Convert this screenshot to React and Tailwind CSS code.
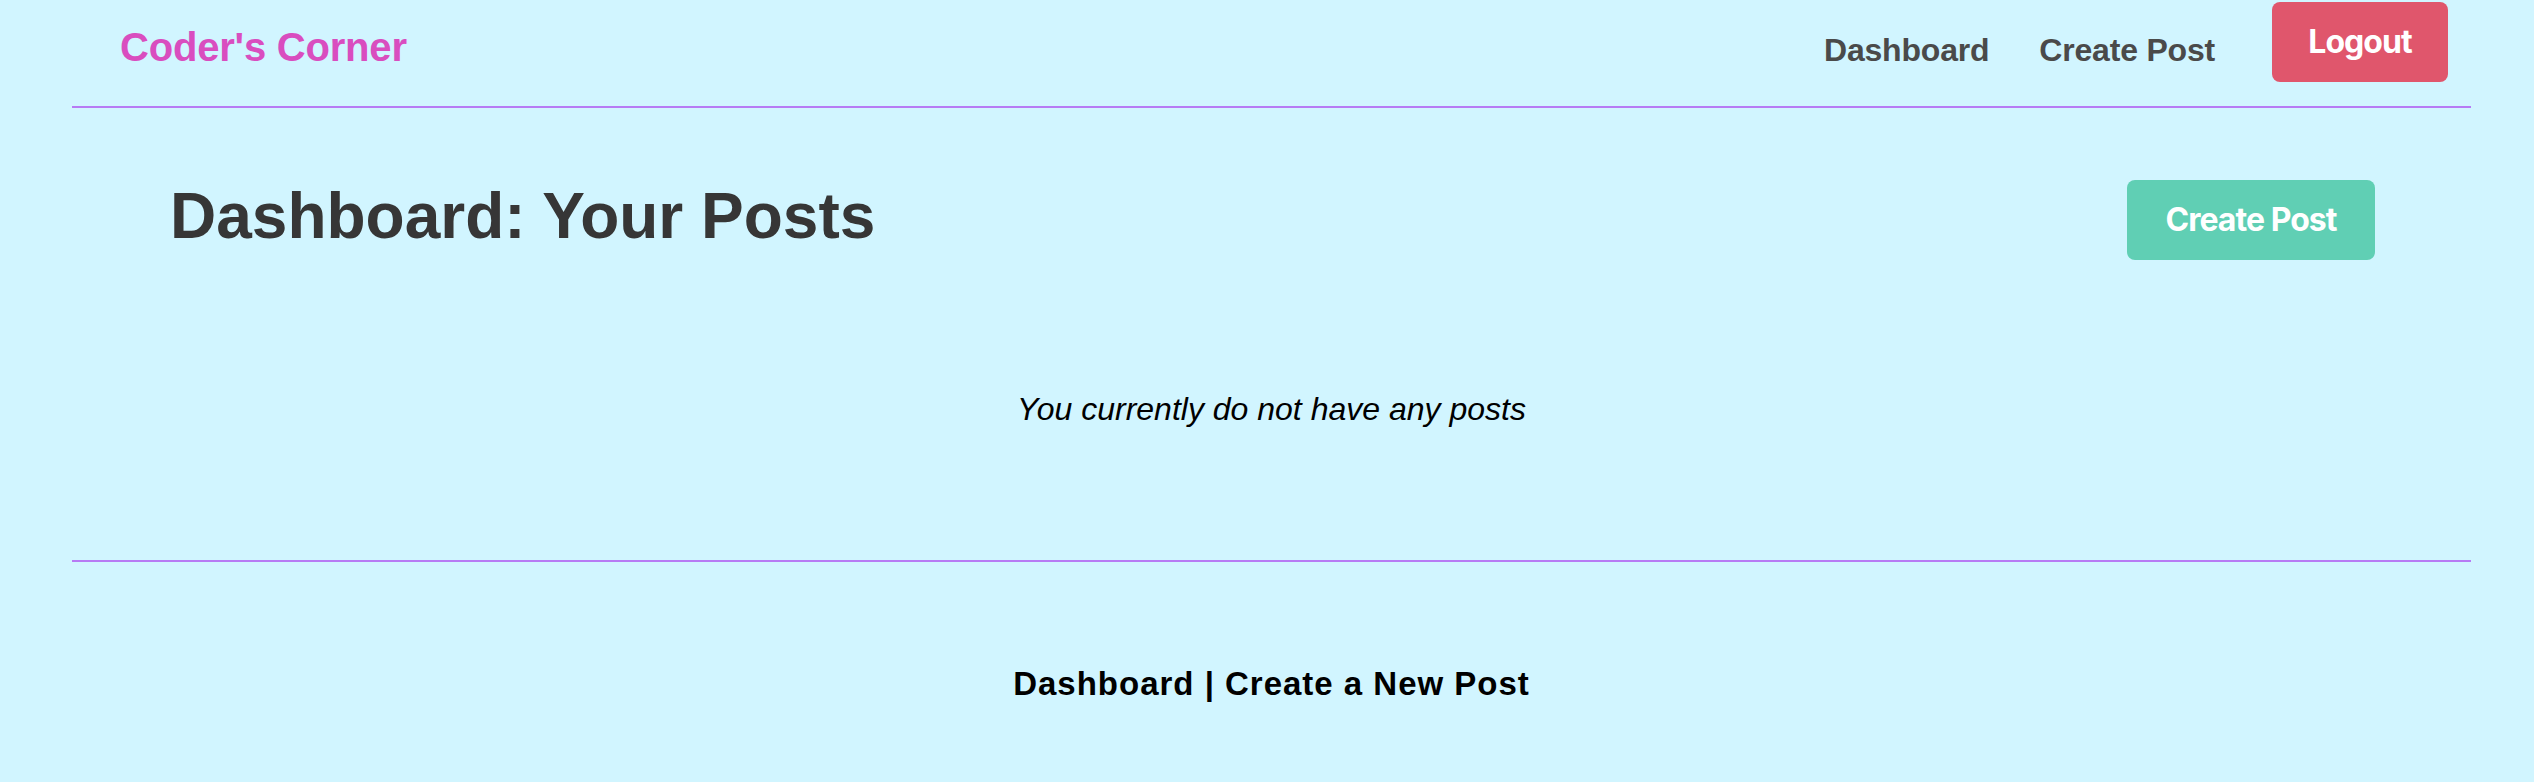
export default function App() {
  const sans = "font-['Liberation_Sans',Arial,sans-serif]";
  const btn = "font-['Inter','Liberation_Sans',sans-serif]";
  return (
    <div className={`min-h-screen bg-[#d1f5ff] pl-[72px] pr-[63px] ${sans}`}>
      <header className="flex items-start justify-between h-[108px] border-b-2 border-[#b77bf4]">
        <a className="ml-[48px] mt-[27px] text-[40px] leading-none font-bold text-[#d94dbf] tracking-[-0.2px]">
          Coder's Corner
        </a>
        <nav className="flex items-start pr-[23px]">
          <a className="mt-[34px] mr-[50px] text-[32px] leading-none font-bold text-[#4a4a4a] tracking-[-0.2px]">
            Dashboard
          </a>
          <a className="mt-[34px] mr-[57px] text-[32px] leading-none font-bold text-[#4a4a4a] tracking-[-0.2px]">
            Create Post
          </a>
          <button className={`mt-[2px] w-[176px] h-[80px] rounded-[8px] bg-[#e0566c] text-white text-[32px] leading-none font-bold tracking-[-0.03em] flex items-center justify-center ${btn}`}>
            Logout
          </button>
        </nav>
      </header>

      <main className="border-b-2 border-[#b77bf4] pb-[135px]">
        <div className="mt-[72px] flex items-start justify-between pl-[98px] pr-[96px]">
          <h1 className="mt-[4px] text-[64px] leading-none font-bold text-[#363636]">
            Dashboard: Your Posts
          </h1>
          <button className={`w-[248px] h-[80px] rounded-[8px] bg-[#60cfb4] text-white text-[32px] leading-none font-bold tracking-[-0.03em] flex items-center justify-center ${btn}`}>
            Create Post
          </button>
        </div>
        <p className="mt-[133px] text-center text-[32px] leading-none italic text-black">
          You currently do not have any posts
        </p>
      </main>

      <footer className="pt-[105px] text-center">
        <p className="text-[33px] leading-none font-bold text-black tracking-[0.03em]">
          <a>Dashboard</a> | <a>Create a New Post</a>
        </p>
      </footer>
    </div>
  );
}
